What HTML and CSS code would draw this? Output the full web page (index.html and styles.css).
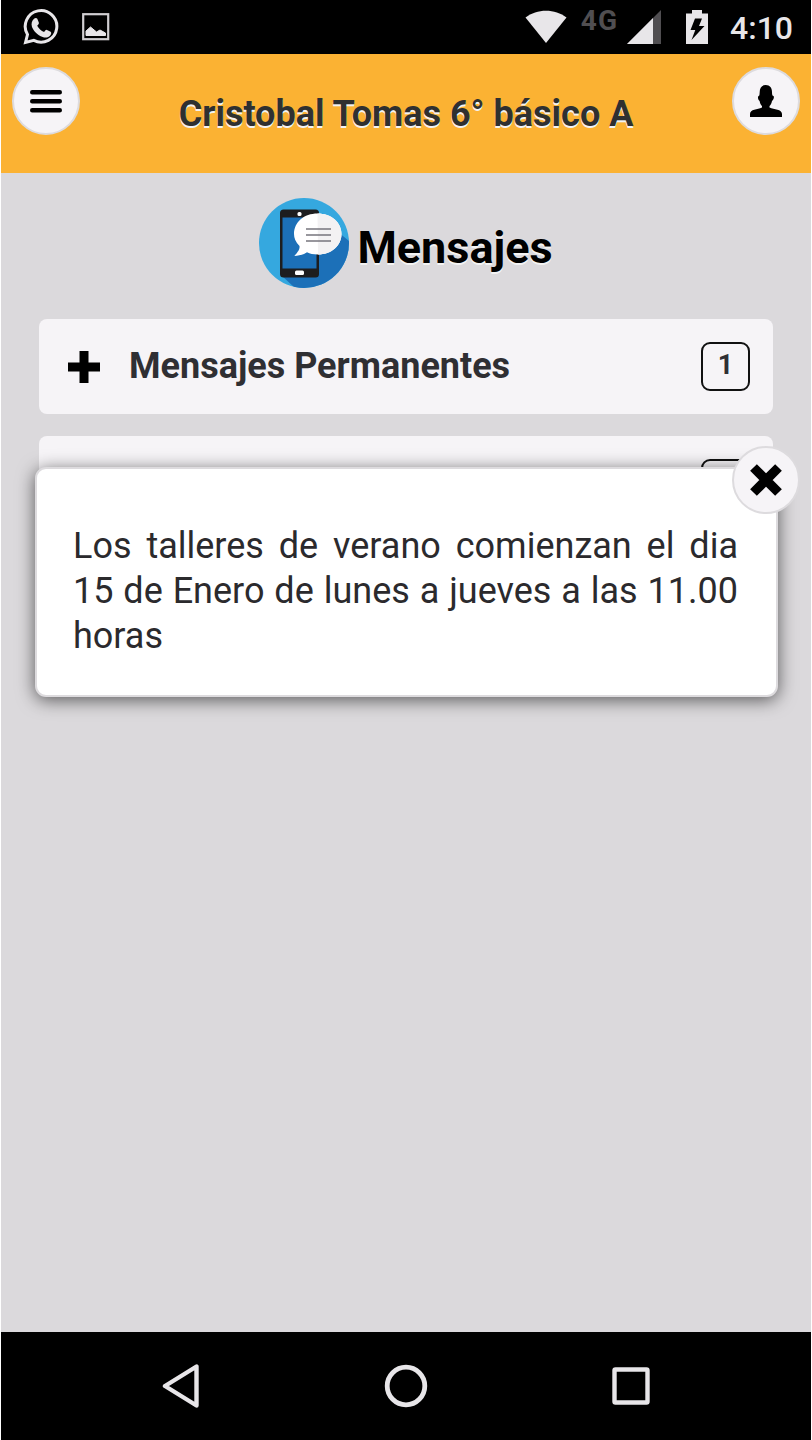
FILE: index.html
```html
<!DOCTYPE html>
<html lang="es">
    <head>
        <meta charset="utf-8">
        <title>Mensajes</title>
        <link rel="stylesheet" href="styles.css">
    </head>
    <body>
        <div class="phone">
            <div class="statusbar">
                <svg class="whatsapp" width="38" height="38" viewBox="0 0 38 38">
                    <path d="M3.500 34.500 L5.500 26.500 A15.800 15.800 0 1 1 11.800 32.400 Z" fill="none" stroke="#e8e6e9" stroke-width="3"/>
                    <path d="M12.300 10.500 c1-.9 2.500-.8 3 .3 l1.500 3.600 c.3 1-.1 1.600-1.600 3.300 c1.600 3 3.900 5 6.900 6.300 c1.300-1.500 1.900-2.500 2.900-2.100 l3.600 1.800 c1 .6.7 2.400-.2 3.500 c-1.700 2.200-4.700 2.900-7.700 1.800 c-5.500-1.900-9-5.800-10.700-10 c-1-3.200-.2-6.500 2.300-8.500z" fill="#e8e6e9"/>
                </svg>
                <svg class="picture" width="28" height="28" viewBox="0 0 28 28">
                    <rect x="1.200" y="1.200" width="25" height="25" fill="none" stroke="#d0ced1" stroke-width="2.200"/>
                    <path d="M4 22.500 V18 L8.500 14 L14.500 19 L18 17 L23.500 20 V22.500 Z" fill="#e8e6e9" stroke="#e8e6e9"/>
                </svg>
                <div class="status-right">
                    <svg class="wifi" width="42" height="34" viewBox="0 0 42 34">
                        <path d="M21 33 L.500 7.500 C12-1.600 30-1.600 41.500 7.500 Z" fill="#e8e6e9"/>
                    </svg>
                    <span class="network">4G</span>
                    <svg class="signal" width="34" height="34" viewBox="0 0 34 34">
                        <path d="M0 34 L34 0 V34 Z" fill="#504e51"/>
                        <path d="M0 34 L26 8 V34 Z" fill="#e8e6e9"/>
                    </svg>
                    <svg class="battery" width="22" height="34" viewBox="0 0 22 34">
                        <path d="M6 0 H16 V3.500 H22 V34 H0 V3.500 H6 Z" fill="#e8e6e9"/>
                        <path d="M9 8.500 H16 L13 16 H18.500 L5.500 30 L9.300 20 H4.500 Z" fill="#000"/>
                    </svg>
                    <span class="clock">4:10</span>
                </div>
            </div>

            <div class="header">
                <div class="round">
                    <svg width="32" height="24" viewBox="0 0 32 24">
                        <path d="M2.200 3.200 H29.800 M2.200 12.200 H29.800 M2.200 21.200 H29.800" stroke="#000" stroke-width="4.400" stroke-linecap="round"/>
                    </svg>
                </div>
                <h1>Cristobal Tomas 6° básico A</h1>
                <div class="round">
                    <svg width="32" height="32" viewBox="0 0 32 32">
                        <path d="M15.700 0 C20 0 22 3 22 7 C22 9 22.200 11 23.500 11 C24.500 12 23.500 15 22 16 C21.500 19 20 20.500 19.500 21 V22.500 C24 24.800 32 24 32 29 V32 H0 V29 C0 24 7.500 24.800 12 22.500 V21 C11.500 20.500 10 19 9.600 16 C8 15 7.500 12 8.500 11 C9.700 11 9.500 9 9.700 7 C9.700 3 11.500 0 15.700 0 Z" fill="#000"/>
                    </svg>
                </div>
            </div>

            <div class="content">
                <div class="section-title">
                    <svg width="90" height="90" viewBox="0 0 90 90">
                        <clipPath id="disc"><circle cx="45" cy="45" r="45"/></clipPath>
                        <g clip-path="url(#disc)">
                            <rect width="90" height="90" fill="#35a8df"/>
                            <path d="M22 77 L60 50 L79 34 L90 43 V90 H36 Z" fill="#1c70b8"/>
                            <rect x="21" y="11.500" width="39" height="68" rx="3.500" fill="#1d1d1f"/>
                            <rect x="23.500" y="19.500" width="34" height="51" fill="#1c70b8"/>
                            <rect x="38.500" y="14" width="4" height="4" rx="1.500" fill="#fff"/>
                            <rect x="36" y="72.500" width="9" height="4.500" rx="1.500" fill="#fff"/>
                            <path d="M35.300 58 C39 54 41 51 40.500 48 C36.500 44 35 40 35 36 C35 24 45 15.500 58.500 15.500 C72 15.500 82.500 24 82.500 36 C82.500 48 72 56.500 59 56.500 C54 56.500 51 55.500 48 54.200 C44 57 40 57.500 35.300 58 Z" fill="#fff"/>
                            <path d="M58.500 15.500 C72 15.500 82.500 24 82.500 36 C82.500 48 72 56.500 59 56.500 Z" fill="#f3f2f3"/>
                            <path d="M47 31 H72 M47 37 H72 M47 43 H72" stroke="#77767d" stroke-width="1.600"/>
                        </g>
                    </svg>
                    <h2>Mensajes</h2>
                </div>

                <div class="item">
                    <svg width="32" height="32" viewBox="0 0 32 32">
                        <path d="M11.500 0 H20.500 V11.500 H32 V20.500 H20.500 V32 H11.500 V20.500 H0 V11.500 H11.500 Z" fill="#000"/>
                    </svg>
                    <span class="label">Mensajes Permanentes</span>
                    <span class="count">1</span>
                </div>
                <div class="item">
                    <span class="label"></span>
                    <span class="count"></span>
                </div>

                <div class="popup">
                    <div class="round close">
                        <svg width="32" height="32" viewBox="0 0 32 32">
                            <path d="M3.500 3.500 L28.500 28.500 M28.500 3.500 L3.500 28.500" stroke="#000" stroke-width="9.500"/>
                        </svg>
                    </div>
                    <p>Los talleres de verano comienzan el dia 15 de Enero de lunes a jueves a las 11.00 horas</p>
                </div>
            </div>

            <div class="navbar">
                <svg width="38" height="46" viewBox="0 0 38 46">
                    <path d="M3 23 L34.500 3.500 V42.500 Z" fill="none" stroke="#e8e6e9" stroke-width="4.400" stroke-linejoin="round"/>
                </svg>
                <svg width="44" height="44" viewBox="0 0 44 44">
                    <circle cx="22" cy="22" r="18.800" fill="none" stroke="#e8e6e9" stroke-width="4.800"/>
                </svg>
                <svg width="38" height="38" viewBox="0 0 38 38">
                    <rect x="2.500" y="2.500" width="33" height="33" rx="1" fill="none" stroke="#e8e6e9" stroke-width="4.400"/>
                </svg>
            </div>
        </div>
    </body>
</html>
```
FILE: styles.css
```css
body{
    margin: 0;
    background-color: white;
    font-family: Roboto, "Liberation Sans", sans-serif;
}

svg{
    display: block;
    flex-shrink: 0;
}

.phone{
    display: flex;
    flex-direction: column;
    width: 810px;
    height: 1440px;
    margin: 0 auto;
    overflow: hidden;
    background-color: #dbd9dc;
}

.statusbar{
    display: flex;
    align-items: center;
    box-sizing: border-box;
    height: 54px;
    padding: 0 18px 0 21px;
    background-color: black;
    color: #e8e6e9;
}

.picture{
    margin-left: 22px;
}

.status-right{
    display: flex;
    align-items: center;
    margin-left: auto;
}

.network{
    margin: -13px 9px 0 14px;
    font-size: 28px;
    font-weight: 700;
    letter-spacing: 1px;
    line-height: 30px;
    color: #504e51;
}

.battery{
    margin: 0 22px 0 25px;
}

.clock{
    margin-top: 2px;
    font-size: 32px;
    font-weight: 500;
}

.header{
    display: flex;
    justify-content: space-between;
    box-sizing: border-box;
    height: 119px;
    padding: 13px 11px 0;
    background-color: #fbb233;
}

.round{
    display: flex;
    align-items: center;
    justify-content: center;
    box-sizing: border-box;
    width: 68px;
    height: 68px;
    border: 2px solid #dddbde;
    border-radius: 50%;
    background-color: #f6f4f7;
}

h1{
    margin: 26px 0 0;
    font-size: 36px;
    font-weight: 700;
    line-height: 42px;
    color: #2f3030;
    text-shadow: 0 2px 0 #f3f3f3;
}

.content{
    position: relative;
    flex: 1;
    padding: 25px 38px 0;
}

.section-title{
    display: flex;
    justify-content: center;
    height: 90px;
    margin-bottom: 31px;
}

h2{
    margin: 24px 0 0 8px;
    font-size: 45px;
    font-weight: 700;
    line-height: 52px;
    color: black;
    text-shadow: 0 2px 0 #f3f3f3;
}

.item{
    display: flex;
    align-items: center;
    box-sizing: border-box;
    height: 95px;
    margin-bottom: 22px;
    padding: 0 23px 0 29px;
    border-radius: 8px;
    background-color: #f6f4f7;
}

.label{
    flex: 1;
    margin: -2px 0 0 29px;
    font-size: 36px;
    font-weight: 700;
    color: #2f2f33;
}

.count{
    box-sizing: border-box;
    width: 49px;
    height: 49px;
    border: 2px solid #111;
    border-radius: 9px;
    font-size: 27px;
    font-weight: 700;
    line-height: 42px;
    text-align: center;
    color: #2f2f33;
}

.popup{
    position: absolute;
    top: 294px;
    left: 34px;
    box-sizing: border-box;
    width: 743px;
    height: 230px;
    padding: 55px 38px 0 36px;
    border: 2px solid #dddbde;
    border-radius: 11px;
    background-color: white;
    box-shadow: 0 3px 18px rgba(0, 0, 0, 0.6);
}

.popup p{
    margin: 0;
    font-size: 36px;
    line-height: 45px;
    text-align: justify;
    color: #2b2a2d;
}

.close{
    position: absolute;
    top: -23px;
    right: -24px;
}

.navbar{
    display: flex;
    align-items: center;
    justify-content: space-between;
    box-sizing: border-box;
    height: 108px;
    padding: 0 161px;
    background-color: black;
}
```
